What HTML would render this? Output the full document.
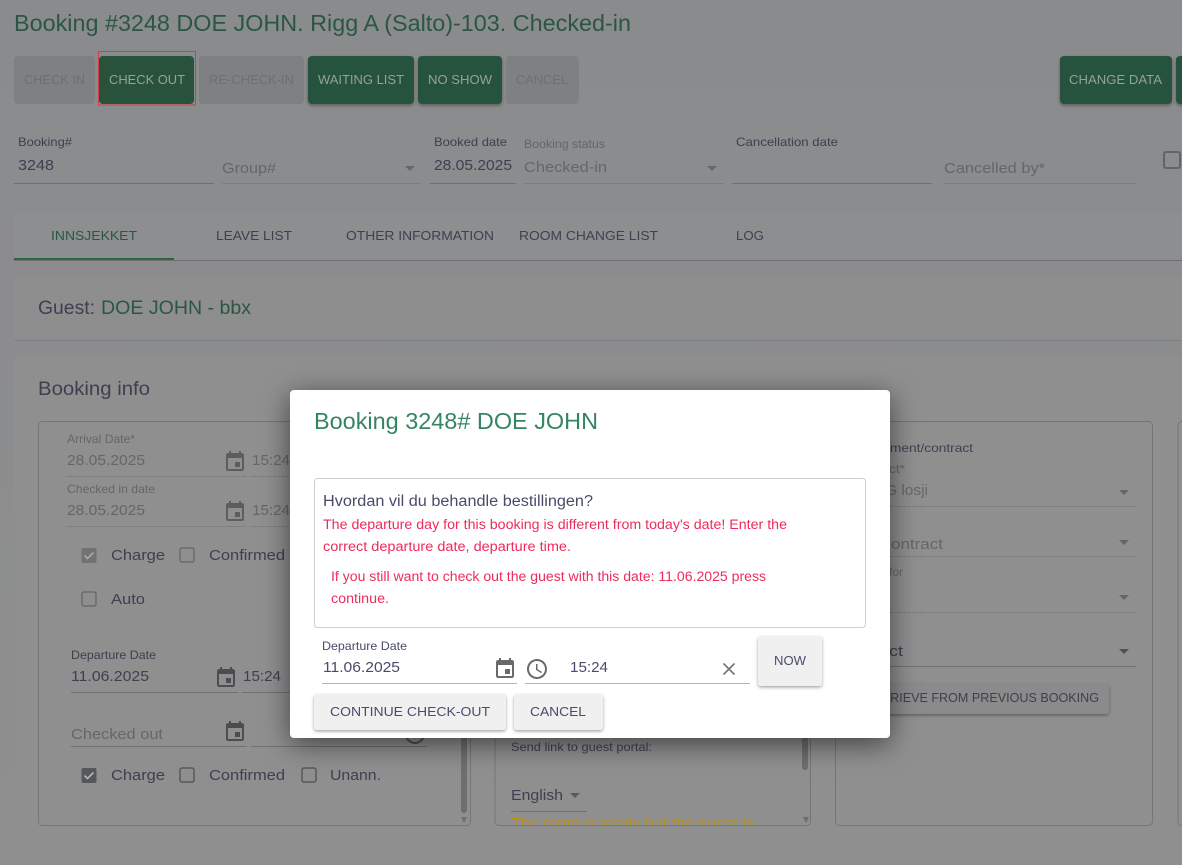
<!DOCTYPE html>
<html lang="en"><head><meta charset="utf-8"><title>Booking 3248</title>
<style>
html,body{margin:0;padding:0;width:1182px;height:865px;overflow:hidden;background:#8c8d8e}
svg{display:block}
text{font-family:"Liberation Sans",sans-serif;white-space:pre}
.d{fill:#3e3f50}.m{fill:#656669}.g{fill:#2b5742}.bt{fill:#96a19a;font-size:13px}.dis{fill:#6e6f71;font-size:13px}
.mt{fill:#484c6a}.r{fill:#ef2a5e;font-size:13.4px}
.dot{stroke:#6f7071;stroke-width:1;stroke-dasharray:1 1;fill:none}.ln{stroke:#707173;stroke-width:1;fill:none}
.p{fill:none;stroke:#747576;stroke-width:1}
</style></head><body>
<svg width="1182" height="865" viewBox="0 0 1182 865" xmlns="http://www.w3.org/2000/svg">
<defs>
<linearGradient id="bg" x1="0" y1="0" x2="0" y2="1"><stop offset="0" stop-color="#8a8b8d"/><stop offset="1" stop-color="#8f8f8f"/></linearGradient>
<symbol id="cal" viewBox="0 0 24 24" width="24" height="24"><path d="M17 12h-5v5h5v-5zM16 1v2H8V1H6v2H5c-1.11 0-1.99.9-1.99 2L3 19c0 1.1.89 2 2 2h14c1.1 0 2-.9 2-2V5c0-1.1-.9-2-2-2h-1V1h-2zm3 18H5V8h14v11z"/></symbol>
<symbol id="clk" viewBox="0 0 24 24" width="24" height="24"><path d="M11.99 2C6.47 2 2 6.48 2 12s4.47 10 9.99 10C17.52 22 22 17.52 22 12S17.52 2 11.99 2zM12 20c-4.42 0-8-3.58-8-8s3.58-8 8-8 8 3.58 8 8-3.58 8-8 8zm.5-13H11v6l5.25 3.15.75-1.23-4.5-2.67z"/></symbol>
<filter id="s1" x="-20%" y="-20%" width="140%" height="150%"><feDropShadow dx="0" dy="1.5" stdDeviation="1.5" flood-color="#000" flood-opacity=".35"/></filter>
<filter id="sm" x="-30%" y="-40%" width="160%" height="190%"><feDropShadow dx="0" dy="6" stdDeviation="14" flood-color="#000" flood-opacity=".55"/></filter>
<clipPath id="c2"><rect x="495" y="421" width="315" height="404"/></clipPath>
</defs>
<rect width="1182" height="865" fill="url(#bg)"/>

<text x="14" y="31" font-size="23" class="g" textLength="617" lengthAdjust="spacingAndGlyphs">Booking #3248 DOE JOHN. Rigg A (Salto)-103. Checked-in</text>

<rect x="14" y="56" width="81" height="48" rx="4" fill="#7f8082"/>
<text x="24" y="84" class="dis" textLength="61" lengthAdjust="spacingAndGlyphs">CHECK IN</text>
<rect x="99" y="56" width="95" height="48" rx="4" fill="#28523c"/>
<rect x="98.500" y="51.500" width="97" height="53.500" fill="none" stroke="#cf3f45" stroke-width="1"/>
<text x="109" y="84" class="bt" textLength="76" lengthAdjust="spacingAndGlyphs">CHECK OUT</text>
<rect x="199" y="56" width="105" height="48" rx="4" fill="#7f8082"/>
<text x="209" y="84" class="dis" textLength="85" lengthAdjust="spacingAndGlyphs">RE-CHECK-IN</text>
<rect x="308" y="56" width="106" height="48" rx="4" fill="#28523c" filter="url(#s1)"/>
<text x="318" y="84" class="bt" textLength="86" lengthAdjust="spacingAndGlyphs">WAITING LIST</text>
<rect x="418" y="56" width="84" height="48" rx="4" fill="#28523c" filter="url(#s1)"/>
<text x="428" y="84" class="bt" textLength="64" lengthAdjust="spacingAndGlyphs">NO SHOW</text>
<rect x="506" y="56" width="73" height="48" rx="4" fill="#7f8082"/>
<text x="516" y="84" class="dis" textLength="52" lengthAdjust="spacingAndGlyphs">CANCEL</text>
<rect x="1060" y="56" width="112" height="48" rx="4" fill="#28523c" filter="url(#s1)"/>
<text x="1069" y="84" class="bt" textLength="93" lengthAdjust="spacingAndGlyphs">CHANGE DATA</text>
<rect x="1176" y="56" width="20" height="48" rx="4" fill="#28523c" filter="url(#s1)"/>

<text x="18" y="146" font-size="12" class="d" textLength="54" lengthAdjust="spacingAndGlyphs">Booking#</text>
<text x="18" y="170" font-size="15" class="d" textLength="36" lengthAdjust="spacingAndGlyphs">3248</text>
<path class="ln" d="M14 183.500H214"/>
<text x="222" y="173" font-size="15" class="m" textLength="54" lengthAdjust="spacingAndGlyphs">Group#</text>
<path class="dot" d="M222 183.500H422"/>
<path d="M405 166h10l-5 5z" fill="#656668"/>
<text x="434" y="146" font-size="12" class="d" textLength="73" lengthAdjust="spacingAndGlyphs">Booked date</text>
<text x="434" y="170" font-size="15" class="d" textLength="78" lengthAdjust="spacingAndGlyphs">28.05.2025</text>
<path class="ln" d="M430 183.500H516"/>
<text x="524" y="148" font-size="12" class="m" textLength="81" lengthAdjust="spacingAndGlyphs">Booking status</text>
<text x="524" y="172" font-size="15" class="m" textLength="83" lengthAdjust="spacingAndGlyphs">Checked-in</text>
<path class="dot" d="M524 183.500H724"/>
<path d="M707 166h10l-5 5z" fill="#656668"/>
<text x="736" y="146" font-size="12" class="d" textLength="102" lengthAdjust="spacingAndGlyphs">Cancellation date</text>
<path class="ln" d="M732 183.500H932"/>
<text x="944" y="173" font-size="15" class="m" textLength="101" lengthAdjust="spacingAndGlyphs">Cancelled by*</text>
<path class="dot" d="M944 183.500H1136"/>
<rect x="1164" y="152" width="16" height="16" rx="2" fill="none" stroke="#636466" stroke-width="2"/>

<rect x="14" y="212" width="1168" height="48" fill="#8d8e8f"/>
<path d="M14 260.500H1182" stroke="#6f7071" stroke-width="1"/>
<rect x="14" y="258" width="160" height="2" fill="#2c6546"/>
<text x="51" y="240" font-size="13" class="g" textLength="86" lengthAdjust="spacingAndGlyphs">INNSJEKKET</text>
<text x="216" y="240" font-size="13" class="d" textLength="76" lengthAdjust="spacingAndGlyphs">LEAVE LIST</text>
<text x="346" y="240" font-size="13" class="d" textLength="148" lengthAdjust="spacingAndGlyphs">OTHER INFORMATION</text>
<text x="519" y="240" font-size="13" class="d" textLength="139" lengthAdjust="spacingAndGlyphs">ROOM CHANGE LIST</text>
<text x="736" y="240" font-size="13" class="d" textLength="28" lengthAdjust="spacingAndGlyphs">LOG</text>

<rect x="14" y="276" width="1168" height="64" fill="#8e8e8f"/>
<path d="M14 340.500H1182" stroke="#7f8082" stroke-width="1"/>
<text x="38" y="314" font-size="19" class="d" textLength="57" lengthAdjust="spacingAndGlyphs">Guest:</text>
<text x="101" y="314" font-size="19" class="g" textLength="150" lengthAdjust="spacingAndGlyphs">DOE JOHN - bbx</text>

<rect x="14" y="357" width="1168" height="490" fill="#8f8f8f"/>
<text x="38" y="395" font-size="19" class="d" textLength="112" lengthAdjust="spacingAndGlyphs">Booking info</text>

<rect class="p" x="38.500" y="421.500" width="432" height="404" rx="4"/>
<rect class="p" x="495" y="421.500" width="315.500" height="404" rx="4"/>
<rect class="p" x="835.500" y="421.500" width="317" height="404" rx="4"/>
<rect class="p" x="1178" y="421.500" width="20" height="404" rx="4"/>

<text x="67" y="443" font-size="12" class="m" textLength="68" lengthAdjust="spacingAndGlyphs">Arrival Date*</text>
<text x="67" y="465" font-size="15" class="m" textLength="78" lengthAdjust="spacingAndGlyphs">28.05.2025</text>
<use href="#cal" x="223" y="450" fill="#5c5d60"/>
<text x="252" y="465" font-size="15" class="m" textLength="38" lengthAdjust="spacingAndGlyphs">15:24</text>
<path class="dot" d="M67 476.500H247M251 476.500H292"/>
<text x="67" y="493" font-size="12" class="m" textLength="88" lengthAdjust="spacingAndGlyphs">Checked in date</text>
<text x="67" y="515" font-size="15" class="m" textLength="78" lengthAdjust="spacingAndGlyphs">28.05.2025</text>
<use href="#cal" x="223" y="500" fill="#5c5d60"/>
<text x="252" y="515" font-size="15" class="m" textLength="38" lengthAdjust="spacingAndGlyphs">15:24</text>
<path class="dot" d="M67 526.500H247M251 526.500H292"/>

<rect x="81.500" y="548" width="15" height="15" rx="2" fill="#717274"/>
<path d="M84.500 555.500l3 3 6-6" fill="none" stroke="#a8a9aa" stroke-width="1.600"/>
<text x="111" y="560" font-size="15" class="d" textLength="54" lengthAdjust="spacingAndGlyphs">Charge</text>
<rect x="180" y="548" width="14" height="14" rx="2" fill="none" stroke="#6a6b6d" stroke-width="1.500"/>
<text x="209" y="560" font-size="15" class="d" textLength="76" lengthAdjust="spacingAndGlyphs">Confirmed</text>
<rect x="82" y="592" width="14" height="14" rx="2" fill="none" stroke="#6a6b6d" stroke-width="1.500"/>
<text x="111" y="604" font-size="15" class="d" textLength="34" lengthAdjust="spacingAndGlyphs">Auto</text>

<text x="71" y="659" font-size="12" class="d" textLength="85" lengthAdjust="spacingAndGlyphs">Departure Date</text>
<text x="71" y="681" font-size="15" class="d" textLength="78" lengthAdjust="spacingAndGlyphs">11.06.2025</text>
<use href="#cal" x="214" y="666" fill="#4c4d50"/>
<text x="243" y="681" font-size="15" class="d" textLength="38" lengthAdjust="spacingAndGlyphs">15:24</text>
<path class="ln" d="M71 692.500H238M242 692.500H292"/>

<text x="71" y="739" font-size="15" class="m" textLength="92" lengthAdjust="spacingAndGlyphs">Checked out</text>
<use href="#cal" x="223" y="720" fill="#4c4d50"/>
<path class="ln" d="M71 746.500H247M251 746.500H427"/>
<use href="#clk" x="403" y="722" fill="#4c4d50"/>
<rect x="81.500" y="768" width="15" height="15" rx="2" fill="#565759"/>
<path d="M84.500 775.500l3 3 6-6" fill="none" stroke="#b5b6b7" stroke-width="1.600"/>
<text x="111" y="780" font-size="15" class="d" textLength="54" lengthAdjust="spacingAndGlyphs">Charge</text>
<rect x="180" y="768" width="14" height="14" rx="2" fill="none" stroke="#58595b" stroke-width="1.500"/>
<text x="209" y="780" font-size="15" class="d" textLength="76" lengthAdjust="spacingAndGlyphs">Confirmed</text>
<rect x="302" y="768" width="14" height="14" rx="2" fill="none" stroke="#58595b" stroke-width="1.500"/>
<text x="330" y="780" font-size="15" class="d" textLength="51" lengthAdjust="spacingAndGlyphs">Unann.</text>
<rect x="461" y="680" width="6" height="133" rx="3" fill="#6d6e6f"/>
<path d="M461 817h6l-3 6z" fill="#6d6e6f"/>

<g clip-path="url(#c2)">
<text x="511" y="751" font-size="12" class="d" textLength="141" lengthAdjust="spacingAndGlyphs">Send link to guest portal:</text>
<text x="511" y="800" font-size="15" class="d" textLength="52" lengthAdjust="spacingAndGlyphs">English</text>
<path d="M570 793h10l-5 5z" fill="#5a5b5d"/>
<path class="ln" d="M511 811.500H587"/>
<text x="511" y="828" font-size="15" fill="#b8911d" textLength="243" lengthAdjust="spacingAndGlyphs">The room is ready but the guest is</text>
<rect x="802" y="700" width="6" height="70" rx="3" fill="#6d6e6f"/>
<path d="M803 817h6l-3 6z" fill="#6d6e6f"/>
</g>

<text x="890" y="452" font-size="12" class="d" textLength="83" lengthAdjust="spacingAndGlyphs">ment/contract</text>
<text x="889" y="473" font-size="12" class="m" textLength="16" lengthAdjust="spacingAndGlyphs">ct*</text>
<text x="885" y="495" font-size="15" class="m" textLength="43" lengthAdjust="spacingAndGlyphs">G losji</text>
<path class="dot" d="M880 506.500H1136M880 556.500H1136M880 612.500H1136"/>
<path d="M1119 490h10l-5 5z M1119 540h10l-5 5z M1119 595h10l-5 5z" fill="#656668"/>
<text x="891" y="549" font-size="15" class="m" textLength="52" lengthAdjust="spacingAndGlyphs">ontract</text>
<text x="889" y="576" font-size="12" class="m" textLength="14" lengthAdjust="spacingAndGlyphs">for</text>
<text x="889" y="656" font-size="15" class="d" textLength="14" lengthAdjust="spacingAndGlyphs">ct</text>
<path class="ln" d="M880 666.500H1136"/>
<path d="M1119 649h10l-5 5z" fill="#4f5052"/>
<rect x="870" y="684" width="239" height="30" rx="3" fill="#8b8b8c" filter="url(#s1)"/>
<text x="865" y="702" font-size="13" class="d" textLength="234" lengthAdjust="spacingAndGlyphs">RETRIEVE FROM PREVIOUS BOOKING</text>

<rect x="290" y="390" width="600" height="348" rx="4" fill="#fff" filter="url(#sm)"/>
<text x="314" y="429" font-size="23" fill="#358560" textLength="284" lengthAdjust="spacingAndGlyphs">Booking 3248# DOE JOHN</text>
<rect x="314.500" y="478.500" width="551" height="149" rx="3" fill="none" stroke="#cfcfcf"/>
<text x="323" y="506" font-size="15.500" class="mt" textLength="270" lengthAdjust="spacingAndGlyphs">Hvordan vil du behandle bestillingen?</text>
<text x="323" y="529" class="r" textLength="464" lengthAdjust="spacingAndGlyphs">The departure day for this booking is different from today's date! Enter the</text>
<text x="323" y="551" class="r" textLength="248" lengthAdjust="spacingAndGlyphs">correct departure date, departure time.</text>
<text x="331" y="581" class="r" textLength="435" lengthAdjust="spacingAndGlyphs">If you still want to check out the guest with this date: 11.06.2025 press</text>
<text x="331" y="603" class="r" textLength="58" lengthAdjust="spacingAndGlyphs">continue.</text>
<text x="322" y="650" font-size="12" class="mt" textLength="85" lengthAdjust="spacingAndGlyphs">Departure Date</text>
<text x="323" y="672" font-size="15" class="mt" textLength="77" lengthAdjust="spacingAndGlyphs">11.06.2025</text>
<use href="#cal" x="493" y="657" fill="#6a6a6a"/>
<use href="#clk" x="525" y="657" fill="#6a6a6a"/>
<text x="570" y="672" font-size="15" class="mt" textLength="38" lengthAdjust="spacingAndGlyphs">15:24</text>
<path d="M723.500 663.500l11 11M734.500 663.500l-11 11" stroke="#777" stroke-width="1.700" fill="none"/>
<path d="M322 683.500H517M525 683.500H750" stroke="#b5b5b5" fill="none"/>
<rect x="758" y="636" width="64" height="50" rx="3" fill="#f0f0f0" filter="url(#s1)"/>
<text x="774" y="665" font-size="13" class="mt" textLength="32" lengthAdjust="spacingAndGlyphs">NOW</text>
<rect x="314" y="694" width="192" height="36" rx="3" fill="#f0f0f0" filter="url(#s1)"/>
<text x="330" y="716" font-size="13" class="mt" textLength="160" lengthAdjust="spacingAndGlyphs">CONTINUE CHECK-OUT</text>
<rect x="514" y="694" width="89" height="36" rx="3" fill="#f0f0f0" filter="url(#s1)"/>
<text x="530" y="716" font-size="13" class="mt" textLength="56" lengthAdjust="spacingAndGlyphs">CANCEL</text>
</svg>
</body></html>
